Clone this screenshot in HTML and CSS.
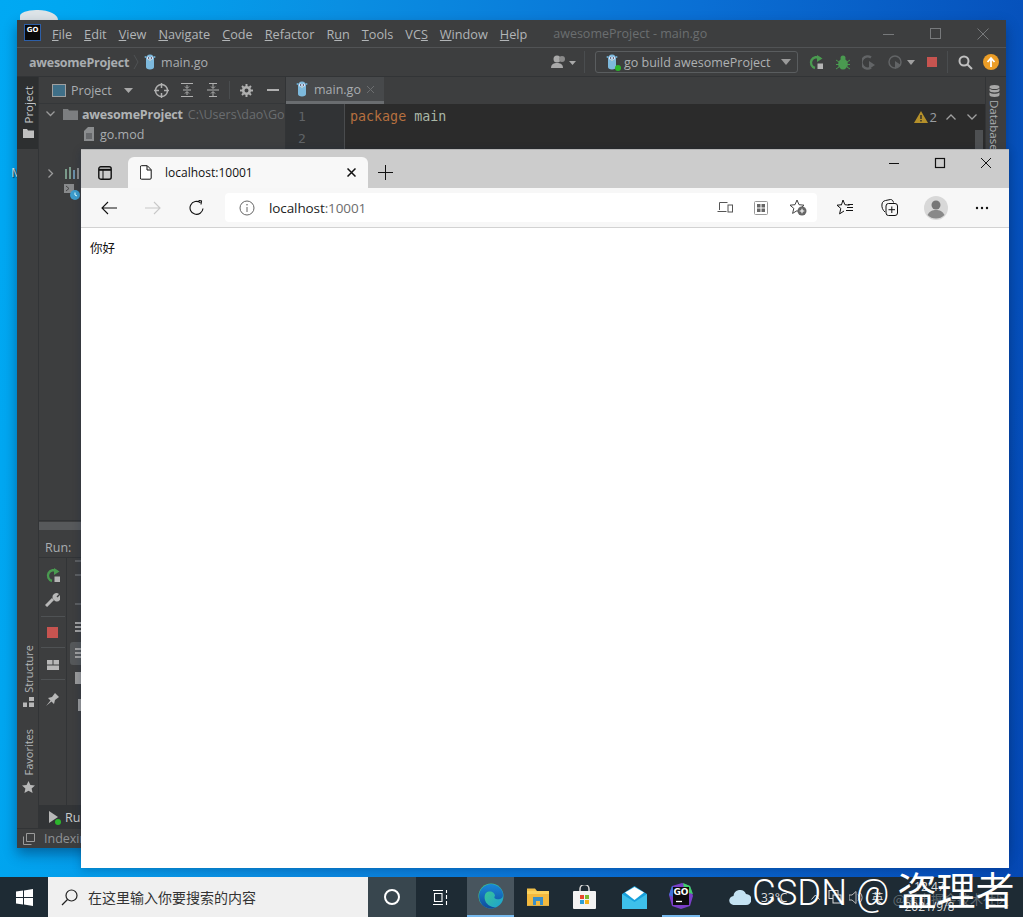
FILE: index.html
```html
<!DOCTYPE html>
<html lang="zh">
<head>
<meta charset="utf-8">
<title>localhost:10001</title>
<link rel="stylesheet" href="styles.css">
</head>
<body>
<svg class="defs" width="0" height="0">
  <defs>
    <symbol id="gopher" viewBox="0 0 12 16">
      <path d="M2 5c0-3 1.500-4.500 4-4.500s4 1.500 4 4.500v8c0 1.500-1.500 2.500-4 2.500s-4-1-4-2.500z" fill="#7db9dc"/>
      <circle cx="1.500" cy="3" r="1" fill="#6aa5c8"/><circle cx="10.500" cy="3" r="1" fill="#6aa5c8"/>
      <circle cx="4.300" cy="4" r="1.500" fill="#eef"/><circle cx="7.700" cy="4" r="1.500" fill="#eef"/>
      <circle cx="4.500" cy="4" r=".7" fill="#223"/><circle cx="7.500" cy="4" r=".7" fill="#223"/>
      <rect x="5.300" y="5.500" width="1.400" height="1.200" fill="#e8dcc0"/>
    </symbol>
    <symbol id="rerun" viewBox="0 0 16 16">
      <path d="M12 4.500A5.500 5.500 0 1 0 7 14" fill="none" stroke="#4a9a50" stroke-width="2.400"/>
      <path d="M9 1l5.500 3.500L9 8z" fill="#4a9a50"/>
      <rect x="9.500" y="9.500" width="5.500" height="5.500" fill="#b5b5b5"/>
    </symbol>
  </defs>
</svg>

<div class="screen">
  <main class="desktop">
    <div class="bin"></div>
    <span class="desk-label">M</span>

    <section class="ide">
      <header class="ide-title">
        <span class="go-logo">GO</span>
        <nav class="menu">
          <span><u>F</u>ile</span><span><u>E</u>dit</span><span><u>V</u>iew</span><span><u>N</u>avigate</span><span><u>C</u>ode</span><span><u>R</u>efactor</span><span>R<u>u</u>n</span><span><u>T</u>ools</span><span>VC<u>S</u></span><span><u>W</u>indow</span><span><u>H</u>elp</span>
        </nav>
        <span class="ide-caption">awesomeProject - main.go</span>
        <div class="win-ctl ide-ctl">
          <svg width="12" height="12" viewBox="0 0 12 12"><path d="M0 6.500h11" stroke="#77797b"/></svg>
          <svg width="12" height="12" viewBox="0 0 12 12"><rect x=".5" y=".5" width="10" height="10" fill="none" stroke="#77797b"/></svg>
          <svg width="12" height="12" viewBox="0 0 12 12"><path d="M.5.500l11 11m0-11l-11 11" stroke="#77797b"/></svg>
        </div>
      </header>

      <div class="ide-nav">
        <b class="crumb">awesomeProject</b>
        <svg class="crumb-sep" width="6" height="16" viewBox="0 0 6 16"><path d="M1 1l4 7-4 7" fill="none" stroke="#4f5254"/></svg>
        <svg class="gopher" width="12" height="16"><use href="#gopher"/></svg>
        <span class="crumb-file">main.go</span>
        <div class="nav-right">
          <svg width="25" height="14" viewBox="0 0 25 14"><circle cx="6" cy="4" r="3.500" fill="#a9a9a9"/><path d="M0 13c0-4 3-5 6-5s6 1 6 5z" fill="#a9a9a9"/><circle cx="11" cy="4" r="3" fill="#8a8a8a"/><path d="M18 6h7l-3.500 4z" fill="#a9a9a9"/></svg>
          <i class="vsep"></i>
          <div class="run-config">
            <span class="cfg-icon"><svg width="12" height="16"><use href="#gopher"/></svg><i class="green-dot"></i></span>
            <span>go build awesomeProject</span>
            <svg class="cfg-caret" width="10" height="6" viewBox="0 0 10 6"><path d="M0 0h10L5 6z" fill="#9a9a9a"/></svg>
          </div>
          <div class="run-tools">
            <svg width="16" height="16"><use href="#rerun"/></svg>
            <svg width="14" height="15" viewBox="0 0 14 15"><ellipse cx="7" cy="9" rx="4.500" ry="5.500" fill="#4a9a50"/><circle cx="7" cy="3" r="2.500" fill="#4a9a50"/><path d="M0 5l3 2M14 5l-3 2M0 9.500h3M14 9.500h-3M0 14l3-2M14 14l-3-2M2 8h10M2 11h10" stroke="#4a9a50" fill="none"/></svg>
            <svg width="14" height="15" viewBox="0 0 14 15"><path d="M9 2.500A6 6 0 1 0 9 12.500" fill="none" stroke="#626466" stroke-width="2.500"/><path d="M7 6l6 4-6 4z" fill="#626466"/></svg>
            <svg width="14" height="15" viewBox="0 0 14 15"><circle cx="7" cy="7" r="6" fill="none" stroke="#626466" stroke-width="1.500"/><path d="M7 6l6 4-6 4z" fill="#626466"/></svg>
            <svg class="tiny-caret" width="8" height="5" viewBox="0 0 8 5"><path d="M0 0h8L4 5z" fill="#a0a0a0"/></svg>
            <span class="stop"></span>
          </div>
          <i class="vsep second"></i>
          <svg class="search" width="15" height="15" viewBox="0 0 15 15"><circle cx="6" cy="6" r="4.500" fill="none" stroke="#c0c0c0" stroke-width="2"/><path d="M9.500 9.500l4.500 4.500" stroke="#c0c0c0" stroke-width="2"/></svg>
          <svg class="update" width="16" height="16" viewBox="0 0 16 16"><circle cx="8" cy="8" r="8" fill="#eb9d27"/><path d="M8 13V5M4.500 8L8 4l3.500 4" fill="none" stroke="#fff" stroke-width="1.800"/></svg>
        </div>
      </div>

      <div class="ide-body">
        <aside class="stripe left">
          <div class="stripe-tab active">
            <span class="vtext">Project</span>
            <svg width="11" height="9" viewBox="0 0 11 9"><path d="M0 0h4l1 1.500h6V9H0z" fill="#c0c0c0"/></svg>
          </div>
          <div class="stripe-low">
            <div class="stripe-tab">
              <span class="vtext">Structure</span>
              <svg width="11" height="10" viewBox="0 0 11 10"><path d="M6 0h5v4H6zM0 5.500h4V10H0zM6 5.500h5V10H6z" fill="#b8b8b8"/></svg>
            </div>
            <div class="stripe-tab fav">
              <span class="vtext">Favorites</span>
              <svg width="13" height="12" viewBox="0 0 13 12"><path d="M6.500 0l1.900 4 4.600.500-3.400 3 1 4.500-4.100-2.300L2.400 12l1-4.500L0 4.500 4.600 4z" fill="#b8b8b8"/></svg>
            </div>
          </div>
        </aside>

        <div class="center">
          <div class="upper">
            <section class="project">
              <div class="panel-head">
                <svg width="14" height="13" viewBox="0 0 14 13"><rect x=".5" y=".5" width="13" height="12" fill="#3f6f88" stroke="#a0a0a0"/></svg>
                <span class="panel-name">Project</span>
                <svg width="9" height="5" viewBox="0 0 9 5"><path d="M0 0h9L4.500 5z" fill="#a8a8a8"/></svg>
                <div class="panel-tools">
                  <svg class="target" width="15" height="15" viewBox="0 0 15 15"><circle cx="7.500" cy="7.500" r="6" fill="none" stroke="#b0b0b0" stroke-width="1.500"/><path d="M7.500 0v5M7.500 10v5M0 7.500h5M10 7.500h5" stroke="#b0b0b0" stroke-width="1.500"/></svg>
                  <svg width="12" height="14" viewBox="0 0 12 14"><path d="M0 .5h12M0 13.500h12M2 7h8" stroke="#b0b0b0"/><path d="M6 2v3M4 3.500L6 5.500 8 3.500M6 12V9M4 10.500L6 8.500 8 10.500" transform="rotate(180 6 7)" fill="none" stroke="#b0b0b0"/></svg>
                  <svg width="12" height="14" viewBox="0 0 12 14"><path d="M0 7h12M2 .5h8M2 13.500h8" stroke="#b0b0b0"/><path d="M6 1v4M4 3.500L6 5.500 8 3.500M6 13V9M4 10.500L6 8.500 8 10.500" fill="none" stroke="#b0b0b0"/></svg>
                  <i class="vsep short"></i>
                  <svg width="13" height="13" viewBox="0 0 13 13"><circle cx="6.500" cy="6.500" r="3.300" fill="none" stroke="#b0b0b0" stroke-width="2.600"/><path d="M6.500 0v2.500M6.500 10.500V13M0 6.500h2.500M10.500 6.500H13M2 2l1.500 1.500M9.500 9.500L11 11M11 2L9.500 3.500M3.500 9.500L2 11" stroke="#b0b0b0" stroke-width="2"/></svg>
                  <svg width="12" height="2" viewBox="0 0 12 2"><path d="M0 1h12" stroke="#b0b0b0" stroke-width="2"/></svg>
                </div>
              </div>
              <ul class="tree">
                <li class="tree-row root">
                  <svg width="9" height="6" viewBox="0 0 9 6"><path d="M.5.500l4 4 4-4" fill="none" stroke="#9a9a9a" stroke-width="1.300"/></svg>
                  <svg class="folder" width="15" height="11" viewBox="0 0 15 11"><path d="M0 0h5l1 1.500h9V11H0z" fill="#7c7e80"/></svg>
                  <b>awesomeProject</b><span class="path">C:\Users\dao\Go</span>
                </li>
                <li class="tree-row child">
                  <svg width="10" height="14" viewBox="0 0 10 14"><path d="M4 0h6v14H0V4z" fill="#8b8d8f"/><path d="M2 7h6M2 9h6M2 11h6" stroke="#44464a"/></svg>
                  <span>go.mod</span>
                </li>
                <li class="tree-gap"></li>
                <li class="tree-row ext">
                  <svg width="6" height="9" viewBox="0 0 6 9"><path d="M.5.500l4 4-4 4" fill="none" stroke="#9a9a9a" stroke-width="1.300"/></svg>
                  <svg class="libs" width="15" height="12" viewBox="0 0 15 12"><path d="M1 2h2v10H1z" fill="#7a9a8a"/><path d="M5 0h2v12H5z" fill="#7a9a8a"/><path d="M9 3h2v9H9z" fill="#6a8fa8"/><path d="M13 1h2v11h-2z" fill="#8a8a8a"/></svg>
                </li>
                <li class="tree-row scratch">
                  <svg width="16" height="16" viewBox="0 0 16 16"><rect width="10" height="9" fill="#888a8c"/><path d="M2 2l3 2.500-3 2.500" fill="none" stroke="#444" /><circle cx="11" cy="11" r="5" fill="#3d9ccc"/><path d="M11 8.500V11l2 1" fill="none" stroke="#dff" /></svg>
                </li>
              </ul>
            </section>

            <section class="editor">
              <div class="tabbar">
                <div class="ed-tab">
                  <svg width="12" height="16"><use href="#gopher"/></svg>
                  <span>main.go</span>
                  <svg width="7" height="7" viewBox="0 0 7 7"><path d="M0 0l7 7m0-7L0 7" stroke="#6c6e70"/></svg>
                </div>
              </div>
              <div class="code">
                <div class="gutter"><span>1</span><span>2</span></div>
                <pre class="code-text"><span class="kw">package</span> main</pre>
                <div class="inspect">
                  <svg width="14" height="12" viewBox="0 0 14 12"><path d="M7 0l7 12H0z" fill="#b5902a"/><path d="M7 4v4M7 9v1.500" stroke="#2b2b2b" stroke-width="1.400"/></svg>
                  <span>2</span>
                  <svg class="up" width="10" height="6" viewBox="0 0 10 6"><path d="M.5 5.500L5 1l4.500 4.500" fill="none" stroke="#a0a0a0" stroke-width="1.300"/></svg>
                  <svg class="down" width="10" height="6" viewBox="0 0 10 6"><path d="M.5.500L5 5l4.500-4.500" fill="none" stroke="#a0a0a0" stroke-width="1.300"/></svg>
                </div>
                <i class="scroll-thumb"></i>
              </div>
            </section>
          </div>

          <section class="run-panel">
            <div class="run-split"><i></i></div>
            <div class="run-head">Run:</div>
            <div class="run-main">
              <div class="run-tools-v">
                <svg width="16" height="16"><use href="#rerun"/></svg>
                <svg width="15" height="15" viewBox="0 0 15 15"><path d="M1 14l7-7" stroke="#b8b8b8" stroke-width="3"/><path d="M8 7a4 4 0 0 1 6-5l-2.500 2.500 1 1L15 3a4 4 0 0 1-5 6z" fill="#b8b8b8"/></svg>
                <i class="hsep"></i>
                <span class="stop big"></span>
                <i class="hsep"></i>
                <svg width="12" height="10" viewBox="0 0 12 10"><path d="M0 0h5.500v4.500H0zM6.500 0H12v4.500H6.500zM0 5.500h12V10H0z" fill="#b8b8b8"/></svg>
                <i class="hsep"></i>
                <svg width="14" height="14" viewBox="0 0 14 14"><path d="M0 14l4.500-5.500-2.500-2.500 4-1L9 1l4 4-4 3-1 4-2.500-2.500z" fill="#b8b8b8"/></svg>
              </div>
              <div class="run-tree">
                <i class="mini"></i><i class="mini b"></i><i class="mini c"></i><i class="mini-list first"></i>
                <div class="mini-sel"><i class="mini-list"></i></div>
                <i class="mini-node"></i><i class="mini-info"></i>
              </div>
            </div>
            <div class="run-foot">
              <div class="run-tab">
                <span class="cfg-icon play"><svg width="9" height="12" viewBox="0 0 9 12"><path d="M0 0l9 6-9 6z" fill="#b8b8b8"/></svg><i class="green-dot"></i></span>
                <span>Run</span>
              </div>
            </div>
          </section>
        </div>

        <aside class="stripe right">
          <svg width="11" height="12" viewBox="0 0 11 12"><ellipse cx="5.500" cy="2" rx="5" ry="2" fill="#a8a8a8"/><path d="M.5 3.500v2c0 1 2 2 5 2s5-1 5-2v-2c-1 1-3 1.500-5 1.500s-4-.5-5-1.500zM.5 7.500v2.500c0 1 2 2 5 2s5-1 5-2V7.500c-1 1-3 1.300-5 1.300s-4-.3-5-1.300z" fill="#a8a8a8"/></svg>
          <span class="vtext down-read">Database</span>
        </aside>
      </div>

      <footer class="ide-status">
        <svg width="12" height="12" viewBox="0 0 12 12"><path d="M3.500.5h8v8h-8zM.5 3.500v8h8" fill="none" stroke="#9a9a9a"/></svg>
        <span>Indexing...</span>
      </footer>
    </section>

    <section class="browser">
      <div class="br-top">
        <svg class="side-icon" width="14" height="14" viewBox="0 0 14 14"><rect x=".8" y=".8" width="12.400" height="12.400" rx="2" fill="none" stroke="#111" stroke-width="1.400"/><path d="M1 3.800h12" stroke="#111" stroke-width="2"/><path d="M5 4v9" stroke="#111"/></svg>
        <div class="br-tab">
          <svg width="12" height="15" viewBox="0 0 12 15"><path d="M1.500.7h5.800l3.900 4v8.300a1.200 1.200 0 0 1-1.200 1.200H1.500A1.200 1.200 0 0 1 .3 13V1.900A1.200 1.200 0 0 1 1.500.7zM7 1v4h4" fill="#fff" stroke="#111"/></svg>
          <span class="br-tab-title">localhost:10001</span>
          <svg class="br-tab-x" width="9" height="9" viewBox="0 0 9 9"><path d="M.5.500l8 8m0-8l-8 8" stroke="#111" stroke-width="1.500"/></svg>
        </div>
        <svg class="newtab" width="15" height="15" viewBox="0 0 15 15"><path d="M7.500 0v15M0 7.500h15" stroke="#111"/></svg>
        <div class="win-ctl br-ctl">
          <svg width="12" height="12" viewBox="0 0 12 12"><path d="M1 6.500h10" stroke="#111"/></svg>
          <svg width="12" height="12" viewBox="0 0 12 12"><rect x="1.500" y="1.500" width="9" height="9" fill="none" stroke="#111" stroke-width="1.200"/></svg>
          <svg width="12" height="12" viewBox="0 0 12 12"><path d="M1 1l10 10m0-10L1 11" stroke="#111"/></svg>
        </div>
      </div>

      <div class="br-bar">
        <svg width="16" height="14" viewBox="0 0 16 14"><path d="M16 7H1M7 1L1 7l6 6" fill="none" stroke="#111" stroke-width="1.100"/></svg>
        <svg width="16" height="14" viewBox="0 0 16 14"><path d="M0 7h15M9 1l6 6-6 6" fill="none" stroke="#c8c8c8" stroke-width="1.100"/></svg>
        <svg width="16" height="16" viewBox="0 0 16 16"><path d="M14 8.500A6.500 6.500 0 1 1 11.500 2.700" fill="none" stroke="#111" stroke-width="1.100"/><path d="M9.500 .3L12.500 1v.1L12 4.500" fill="none" stroke="#111" stroke-width="1.100"/></svg>
        <div class="address">
          <svg width="16" height="16" viewBox="0 0 16 16"><circle cx="8" cy="8" r="7" fill="none" stroke="#666"/><path d="M8 7v5" stroke="#666"/><circle cx="8" cy="4.800" r=".8" fill="#666"/></svg>
          <span class="url">localhost<span class="port">:10001</span></span>
          <div class="addr-icons">
            <svg width="16" height="13" viewBox="0 0 16 13"><path d="M2.500 9V1.500h8M.5 10.500h9" fill="none" stroke="#555"/><rect x="11" y="4" width="4.500" height="7" fill="none" stroke="#555"/></svg>
            <svg width="14" height="14" viewBox="0 0 14 14"><rect x=".5" y=".5" width="13" height="13" rx="1" fill="none" stroke="#999"/><path d="M3 3h3.500v3.500H3zM7.500 3H11v3.500H7.500zM3 7.500h3.500V11H3zM7.500 7.500H11V11H7.500z" fill="#666"/></svg>
            <svg width="18" height="17" viewBox="0 0 18 17"><path d="M8 1l2 4.700 5 .5-3.800 3.200 1.200 5-4.400-2.700L3.600 14.400l1.200-5L1 6.200l5-.5z" fill="none" stroke="#444"/><circle cx="13" cy="12" r="4.500" fill="#666"/><path d="M13 9.700v4.600M10.700 12h4.600" stroke="#fff" stroke-width="1.100"/></svg>
          </div>
        </div>
        <div class="br-right">
          <svg width="18" height="17" viewBox="0 0 18 17"><path d="M7 1l1.900 4.700 4.600.5M6 5.700L1 6.200l3.800 3.200-1.200 5.500L8 12" fill="none" stroke="#111"/><path d="M7 1L5.500 5.700M11 8.500h6M10 11.500h7M12 5.500h5" stroke="#111"/></svg>
          <svg width="17" height="17" viewBox="0 0 17 17"><path d="M4 13C1.500 11 .5 8 1 5c.3-2 1.500-3 3.500-3.500l5-1c1.500 0 2.500 1 3 3" fill="none" stroke="#111"/><rect x="5" y="4.500" width="11.500" height="12" rx="2.500" fill="#f7f7f7" stroke="#111"/><path d="M10.800 7.500v6.500M7.500 10.700h6.500" stroke="#111"/></svg>
          <svg class="avatar" width="24" height="24" viewBox="0 0 24 24"><circle cx="12" cy="12" r="12" fill="#d8d8d8"/><circle cx="12" cy="9" r="4.500" fill="#777"/><path d="M3.500 19c2-4 5-5 8.500-5s6.500 1 8.500 5a12 12 0 0 1-17 0z" fill="#888"/></svg>
          <svg width="14" height="4" viewBox="0 0 14 4"><circle cx="2" cy="2" r="1.200" fill="#111"/><circle cx="7" cy="2" r="1.200" fill="#111"/><circle cx="12" cy="2" r="1.200" fill="#111"/></svg>
        </div>
      </div>

      <div class="br-page">你好</div>
    </section>
  </main>

  <footer class="taskbar">
    <div class="tb-start">
      <svg width="17" height="17" viewBox="0 0 17 17"><path d="M0 2.500l7-1v6.500H0zM8 1.400L17 0v8H8zM0 9h7v6.500l-7-1zM8 9h9v8l-9-1.400z" fill="#fff"/></svg>
    </div>
    <div class="tb-search">
      <svg width="17" height="17" viewBox="0 0 17 17"><circle cx="10.500" cy="6.500" r="5.500" fill="none" stroke="#222" stroke-width="1.200"/><path d="M6.500 10.500L1 16" stroke="#222" stroke-width="1.300"/></svg>
      <span>在这里输入你要搜索的内容</span>
    </div>
    <div class="tb-cortana"><i></i></div>
    <div class="tb-view">
      <svg width="16" height="15" viewBox="0 0 16 15"><path d="M1 .5h10M1 14.500h10M2.500 3.500h7.500v8H2.500zM14.500 0v3M14.500 5v4M14.500 11v4" fill="none" stroke="#fff" stroke-width="1.100"/></svg>
    </div>
    <div class="tb-app edge active">
      <svg width="26" height="26" viewBox="0 0 26 26">
        <defs>
          <linearGradient id="edgeA" x1="0" y1="0" x2="1" y2="1"><stop offset="0" stop-color="#46d27a"/><stop offset="1" stop-color="#1a9fd8"/></linearGradient>
          <linearGradient id="edgeB" x1="0" y1="0" x2="0" y2="1"><stop offset="0" stop-color="#1a88d8"/><stop offset="1" stop-color="#0f4c9c"/></linearGradient>
        </defs>
        <circle cx="13" cy="13" r="12.500" fill="url(#edgeA)"/>
        <path d="M1 13C1 6 7 1 13 1c6 0 12 5 12 11 0 4-4 5-7 4s-1-3-1-3c0-3-3-5-6-4.500C7 9 6 13 7 17s6 8 11 7c-2 1.200-4 1.500-5 1.500C6 25.500 1 20 1 13z" fill="url(#edgeB)"/>
      </svg>
    </div>
    <div class="tb-app explorer">
      <svg width="22" height="20" viewBox="0 0 22 20"><path d="M0 1.500h8l2 2.500h12v14.500H0z" fill="#f1c048"/><rect y="4" width="22" height="14.500" fill="#fbd25e"/><rect x="0" y="7" width="22" height="11.500" fill="#f3b93e"/><path d="M6 10h10v8h-3v-4H9v4H6z" fill="#3a8fc8"/></svg>
    </div>
    <div class="tb-app store">
      <svg width="23" height="24" viewBox="0 0 23 24"><path d="M7 6V4a4 4 0 0 1 9 0v2" fill="none" stroke="#ddd" stroke-width="1.500"/><rect y="6" width="23" height="18" rx="1" fill="#f3f3f3"/><rect x="7" y="10" width="4" height="4" fill="#e8472e"/><rect x="12" y="10" width="4" height="4" fill="#7cb82f"/><rect x="7" y="15" width="4" height="4" fill="#2c9fd8"/><rect x="12" y="15" width="4" height="4" fill="#f6b21b"/></svg>
    </div>
    <div class="tb-app mail">
      <svg width="25" height="23" viewBox="0 0 25 23"><path d="M12.500 0L25 8v15H0V8z" fill="#17a0dc"/><path d="M0 8l12.500 8L25 8v15H0z" fill="#3ec0ea"/><path d="M3 6.500L12.500 1 22 6.500 12.500 14z" fill="#fff"/></svg>
    </div>
    <div class="tb-app goland">
      <svg width="24" height="26" viewBox="0 0 24 26"><path d="M3 3l10-3 8 3 3 10-3 10-9 3-9-3-3-11z" fill="#7a3fc8"/><path d="M14 0l7 3 3 8-8-2z" fill="#3fcf6a"/><path d="M0 12l3-9 6 4-3 8z" fill="#3f72d8"/><rect x="4" y="4" width="16" height="18" fill="#0c0c0e"/><path d="M7 18.500h6" stroke="#fff" stroke-width="1.300"/></svg>
      <span>GO</span>
    </div>
    <div class="tb-tray">
      <svg width="22" height="16" viewBox="0 0 22 16"><path d="M5 16a4.500 4.500 0 0 1-.5-9A6.500 6.500 0 0 1 17 5a5.500 5.500 0 0 1 0 11z" fill="#c4e2f2"/></svg>
      <span class="temp">33°C</span>
      <svg class="tray-caret" width="9" height="6" viewBox="0 0 9 6"><path d="M.5 5.500L4.500 1l4 4.500" fill="none" stroke="#ddd"/></svg>
      <svg class="tray-net" width="14" height="14" viewBox="0 0 14 14"><rect x="1" y=".5" width="9" height="8" fill="none" stroke="#ddd"/><rect x="5" y="5" width="8" height="8" fill="#1e2a33" stroke="#ddd"/></svg>
      <svg class="tray-vol" width="14" height="13" viewBox="0 0 14 13"><path d="M0 4h3l4-3.500v12L3 9H0z" fill="none" stroke="#bbb"/><path d="M9 3.500a4 4 0 0 1 0 6M11 1.500a7 7 0 0 1 0 10" fill="none" stroke="#bbb"/></svg>
      <span class="ime">英</span>
      <div class="clock"><span>12:47</span><span>2021/9/8</span></div>
    </div>
    <div class="watermark-faint">@稀土掘金技术社区</div>
    <div class="watermark"><span class="wm-latin">CSDN @</span><span class="wm-cjk">盗理者</span></div>
  </footer>
</div>
</body>
</html>
```

FILE: styles.css
```css
* { box-sizing: border-box; }
html, body { margin: 0; height: 100%; overflow: hidden; }
body { font-family: "Open Sans", "Noto Sans CJK SC", sans-serif; }
ul { list-style: none; margin: 0; padding: 0; }
svg { display: block; flex: none; }
i { display: block; }
.defs { position: absolute; }

.screen { height: 917px; display: flex; flex-direction: column; overflow: hidden; }
.desktop {
  position: relative; flex: 1; overflow: hidden;
  background: linear-gradient(97deg, #00a9f3 0%, #00a6f0 8%, #0a8fe2 30%, #0a6fd4 62%, #0548b4 100%);
}
.bin { position: absolute; left: 20px; top: 10px; width: 38px; height: 12px; background: #dde4e8; border-radius: 16px 20px 0 0 / 6px 10px 0 0; }
.desk-label { position: absolute; left: 11px; top: 163px; font-size: 13px; color: #dff0fa; text-shadow: 1px 1px 1px #022; }

/* ---------- IDE ---------- */
.ide {
  position: absolute; left: 17px; top: 20px; width: 989px; height: 828px;
  display: flex; flex-direction: column;
  background: #3d3e3f; color: #a9adb0; font-size: 12.5px;
  box-shadow: 0 6px 12px rgba(0, 30, 70, .45);
}
.ide-title { height: 28px; flex: none; display: flex; align-items: center; padding-left: 8px; border-bottom: 1px solid #515355; }
.go-logo {
  width: 15px; height: 15px; background: #0a0a0a; color: #fff; font: 700 7px/11px "DejaVu Sans", sans-serif;
  text-align: center; outline: 1px solid #2d5fa8; margin-right: 12px; margin-top: -2px;
}
.menu { display: flex; gap: 12px; color: #b2b5b7; font-size: 12.7px; }
.ide-caption { margin-left: 26px; color: #6b6e70; }
.win-ctl { display: flex; margin-left: auto; }
.ide-ctl { gap: 35px; padding-right: 17px; }

.ide-nav { height: 29px; flex: none; display: flex; align-items: center; padding-left: 12px; border-bottom: 1px solid #323436; }
.crumb { color: #a9adb0; letter-spacing: -.25px; }
.crumb-sep { margin: 0 5px 0 4px; }
.gopher { margin-right: 5px; }
.crumb-file { color: #a9adb0; }
.nav-right { margin-left: auto; display: flex; align-items: center; padding-right: 7px; }
.vsep { width: 1px; height: 22px; background: #4a4d4f; margin: 0 10px 0 8px; }
.vsep.second { margin: 0 10px 0 10px; }
.vsep.short { height: 18px; margin: 0 -4.5px 0 -4px; }
.run-config {
  width: 203px; height: 22px; border: 1px solid #5a5d5f; border-radius: 3px;
  display: flex; align-items: center; gap: 6px; padding: 0 6px 0 10px; color: #aeb1b3;
}
.cfg-caret { margin-left: auto; }
.cfg-icon { position: relative; display: block; }
.green-dot { position: absolute; right: -3px; bottom: -1px; width: 6px; height: 6px; border-radius: 50%; background: #2cb52c; }
.run-tools { display: flex; align-items: center; gap: 12px; margin-left: 10px; }
.tiny-caret { margin-left: -7px; }
.stop { width: 10px; height: 10px; background: #c75450; display: block; }
.stop.big { width: 11px; height: 11px; }
.update { margin-left: 10px; }

.ide-body { flex: 1; min-height: 0; display: flex; }
.stripe { flex: none; display: flex; flex-direction: column; }
.stripe.left { width: 22px; padding-left: 1px; border-right: 1px solid #323436; }
.stripe-tab { display: flex; flex-direction: column; align-items: center; gap: 5px; color: #b4b7b9; font-size: 11px; }
.stripe-tab.active { background: #2d2f30; height: 72px; padding-top: 9px; color: #c4c6c8; font-size: 11.5px; margin-left: -1px; padding-left: 1px; }
.stripe-low { margin-top: auto; margin-bottom: 35px; display: flex; flex-direction: column; }
.stripe-tab.fav { margin-top: 22px; }
.vtext { writing-mode: vertical-rl; transform: rotate(180deg); line-height: 15px; }
.vtext.down-read { transform: none; margin-top: 3px; }
.stripe.right { width: 21px; align-items: center; padding: 8px 4px 0 0; color: #a9adb0; font-size: 11.5px; border-left: 1px solid #323436; }

.center { flex: 1; min-width: 0; display: flex; flex-direction: column; }
.upper { height: 444px; flex: none; display: flex; border-bottom: 1px solid #323436; }

.project { width: 246px; flex: none; overflow: hidden; }
.panel-head { height: 27px; display: flex; align-items: center; padding-left: 13px; border-bottom: 1px solid #353739; }
.panel-name { margin: 0 12px 0 5px; }
.panel-tools { display: flex; align-items: center; gap: 14px; margin-left: 21px; }
.target { margin-right: -1.5px; }
.tree-row { height: 20px; display: flex; align-items: center; white-space: nowrap; }
.tree-row.root { padding-left: 7px; }
.tree-row.root b { margin: 0 5px 0 4px; color: #b0b3b5; letter-spacing: -.2px; }
.folder { margin-left: 8px; }
.path { color: #6a6d6f; }
.tree-row.child { padding-left: 45px; gap: 6px; }
.tree-gap { height: 19px; }
.tree-row.ext { padding-left: 9px; }
.libs { margin-left: 10px; }
.tree-row.scratch { padding-left: 25px; height: 18px; }

.editor { flex: 1; min-width: 0; display: flex; flex-direction: column; border-left: 1px solid #323436; }
.tabbar { height: 27px; flex: none; display: flex; }
.ed-tab {
  width: 98px; display: flex; align-items: center; gap: 6px; padding-left: 10px;
  background: #47494b; border-bottom: 3px solid #6a6d70; color: #a9adb0;
}
.code { flex: 1; position: relative; display: flex; background: #2b2b2b; }
.gutter { width: 59px; flex: none; background: #313335; border-right: 1px solid #4a4c4e; display: flex; flex-direction: column; padding: 2px 0 0 12px; color: #606366; font: 13px/22px "DejaVu Sans Mono", monospace; }
.code-text { margin: 0; padding: 2px 0 0 5px; font: 13.33px/22px "DejaVu Sans Mono", monospace; color: #a9b7a6; }
.kw { color: #b5703f; }
.inspect { position: absolute; right: 8px; top: 5px; display: flex; align-items: center; color: #9a9da0; font-size: 13px; line-height: 16px; }
.inspect span { margin-left: 2px; }
.inspect .up { margin-left: 9px; }
.inspect .down { margin-left: 11px; }
.scroll-thumb { position: absolute; right: 2px; top: 26px; width: 8px; height: 60px; background: #4e5052; }

.run-panel { flex: 1; min-height: 0; display: flex; flex-direction: column; }
.run-split { height: 13px; flex: none; padding-top: 1px; }
.run-split i { height: 8px; background: #57595b; }
.run-head { height: 24px; flex: none; padding: 4px 0 0 6px; color: #a9adb0; border-bottom: 1px solid #323436; line-height: 20px; }
.run-main { flex: 1; min-height: 0; display: flex; }
.run-tools-v { width: 28px; flex: none; border-right: 1px solid #323436; display: flex; flex-direction: column; align-items: center; padding-top: 9px; gap: 9px; }
.hsep { width: 24px; height: 1px; background: #4f5254; margin: 0 0 3px; }
.hsep:first-of-type { margin-bottom: 1px; }
.run-tree { flex: 1; display: flex; flex-direction: column; padding: 2px 0 0 3px; }
.mini { width: 6px; height: 2px; background: #5c5e60; margin: 0 0 0 5px; }
.mini.b { margin-top: 12px; }
.mini.c { margin-top: 27px; }
.mini-list { width: 9px; height: 10px; margin: 17px 0 0 5px; background: repeating-linear-gradient(#a0a0a0 0 2px, transparent 2px 4px); }
.mini-sel { width: 12px; height: 23px; margin-top: 10px; background: #55585a; border-radius: 3px 0 0 3px; padding-top: 1px; }
.mini-sel .mini-list { margin: 5px 0 0 5px; }
.mini-node { width: 9px; height: 12px; margin: 7px 0 0 5px; background: #9a9a9a; }
.mini-info { width: 3px; height: 12px; margin: 15px 0 0 8px; background: #9a9a9a; }
.run-foot { height: 23px; flex: none; border-top: 1px solid #323436; }
.run-tab { height: 22px; display: flex; align-items: center; gap: 7px; padding-left: 10px; background: #323436; color: #c8cacc; }
.cfg-icon.play .green-dot { right: -3px; bottom: -2px; }

.ide-status { height: 20px; flex: none; display: flex; align-items: center; gap: 9px; padding-left: 6px; border-top: 1px solid #323436; color: #8f9295; }

/* ---------- Browser ---------- */
.browser {
  position: absolute; left: 81px; top: 149px; width: 928px; height: 719px;
  display: flex; flex-direction: column; background: #fff; color: #111;
  font-size: 12px; border-top: 1px solid #b5b5b5;
  box-shadow: 0 2px 8px rgba(0, 30, 70, .25);
}
.br-top { height: 38px; flex: none; display: flex; align-items: flex-end; background: #cccccc; }
.side-icon { margin: 0 0 8px 17px; }
.br-tab {
  width: 240px; height: 31px; margin-left: 16px; background: #f8f8f8; border-radius: 6px 6px 0 0;
  display: flex; align-items: center; padding: 0 12px; gap: 13px;
}
.br-tab-title { flex: 1; }
.newtab { margin: 0 0 8px 10px; }
.br-ctl { gap: 34px; align-self: flex-start; padding: 7px 17px 0 0; }

.br-bar { height: 40px; flex: none; display: flex; align-items: center; padding-left: 20px; gap: 28px; background: #f7f7f7; border-bottom: 1px solid #d2d2d2; }
.address { width: 592px; height: 29px; margin-left: -8px; background: #fff; border-radius: 4px; display: flex; align-items: center; padding: 0 10px 0 14px; gap: 14px; }
.url { font-size: 13.5px; color: #222; letter-spacing: -.1px; }
.port { color: #6d6d6d; }
.addr-icons { margin-left: auto; display: flex; align-items: center; gap: 21px; }
.br-right { display: flex; align-items: center; margin-left: -9px; gap: 27px; }
.avatar { margin-left: -1px; }
.br-page { flex: 1; padding: 11px 9px; font: 12.5px/18px "Noto Sans CJK SC", sans-serif; color: #111; }

/* ---------- Taskbar ---------- */
.taskbar { position: relative; height: 40px; flex: none; display: flex; background: #1e2b34; color: #fff; }
.tb-start { width: 48px; display: flex; align-items: center; justify-content: center; }
.tb-search { width: 320px; background: #f0f0f0; color: #333; display: flex; align-items: center; gap: 10px; padding-left: 13px; font: 14px "Noto Sans CJK SC", sans-serif; }
.tb-cortana { width: 48px; background: #38464e; display: flex; align-items: center; justify-content: center; }
.tb-cortana i { width: 16px; height: 16px; border: 2px solid #fff; border-radius: 50%; }
.tb-view { width: 51px; padding-right: 4px; display: flex; align-items: center; justify-content: center; }
.tb-app { display: flex; align-items: center; justify-content: center; position: relative; }
.tb-app.edge { width: 47px; background: #48555e; border-bottom: 2px solid #76b9ed; }
.tb-app.explorer { width: 48px; }
.tb-app.store { width: 44px; }
.tb-app.mail { width: 56px; }
.tb-app.goland { width: 38px; border-bottom: 2px solid #76b9ed; }
.goland span { position: absolute; left: 0; right: 0; top: 10px; text-align: center; font: 700 9px/10px "DejaVu Sans", sans-serif; color: #fff; }
.tb-tray { flex: 1; display: flex; align-items: center; font-size: 12px; padding-left: 29px; color: #ddd; }
.temp { margin-left: 10px; }
.tray-caret { margin-left: 24px; }
.tray-net { margin-left: 8px; }
.tray-vol { margin-left: 7px; }
.ime { margin-left: 8px; font-family: "Noto Sans CJK SC", sans-serif; }
.clock { display: flex; flex-direction: column; align-items: center; margin-left: 21px; font-size: 12px; line-height: 20px; }
.watermark { position: absolute; left: 752px; top: -15px; white-space: nowrap; color: #fff; line-height: 52px; display: flex; align-items: baseline; }
.wm-latin { font: 300 36.5px/52px Roboto, sans-serif; white-space: pre; }
.wm-cjk { font: 39px/52px "Noto Sans CJK SC", sans-serif; margin-left: 8px; }
.watermark-faint { position: absolute; right: 14px; top: 13px; font: 13px/18px "Noto Sans CJK SC", sans-serif; color: rgba(255, 255, 255, .3); white-space: nowrap; }
```
